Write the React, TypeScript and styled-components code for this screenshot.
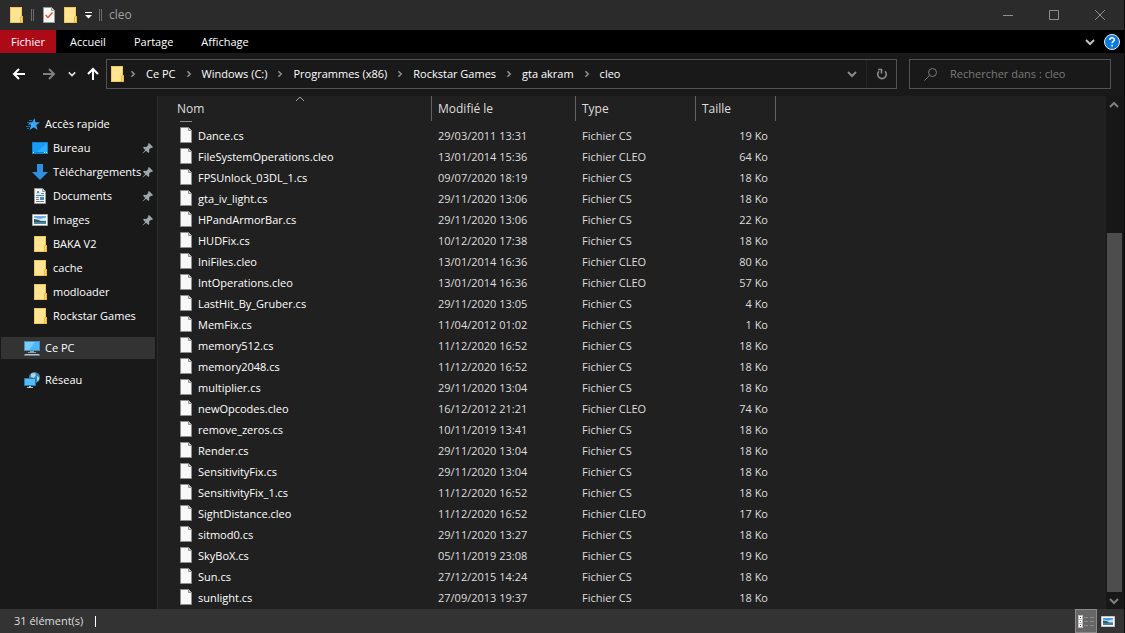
import React from 'react';
import styled, { createGlobalStyle, css } from 'styled-components';

const GlobalStyle = createGlobalStyle`
  * { box-sizing: border-box; }
  html, body, #root { height: 100%; margin: 0; }
  body { background: #191919; }
  body, button, input {
    font-family: "Open Sans", "Noto Sans", sans-serif;
    font-size: 11px;
    line-height: 16px;
    color: #fff;
  }
  button { border: 0; padding: 0; margin: 0; background: none; cursor: default; }
  svg { display: block; flex: none; }
`;

const Window = styled.div`
  display: flex;
  flex-direction: column;
  height: 100vh;
  border-right: 1px solid #0a0a0a;
  background: #191919;
  overflow: hidden;
`;

const TitleBar = styled.header`
  display: flex;
  align-items: center;
  flex: none;
  height: 30px;
  padding-left: 8px;
  background: #2b2b2b;
`;

const QuickTools = styled.div`
  display: flex;
  align-items: center;
  gap: 7px;
`;

const ToolButton = styled.button`
  display: flex;
  align-items: center;
  justify-content: center;
`;

const Bars = styled.span`
  width: 3px;
  height: 12px;
  margin-right: 2px;
  border: solid #6c6c6c;
  border-width: 0 1px;
`;

const Title = styled.h1`
  margin: 0 0 0 5px;
  font-size: 12px;
  font-weight: 400;
  color: #a0a0a0;
`;

const Captions = styled.div`
  display: flex;
  margin-left: auto;
  padding-right: 1px;
`;

const CaptionButton = styled.button`
  display: flex;
  align-items: center;
  justify-content: center;
  width: 46px;
  height: 29px;
`;

const Ribbon = styled.nav`
  display: flex;
  flex: none;
  height: 23px;
  background: #000;
`;

const RibbonTab = styled.button<{ $file?: boolean }>`
  padding: 0 ${p => (p.$file ? 11 : 14)}px;
  background: ${p => (p.$file ? '#ad0a18' : 'transparent')};
`;

const RibbonEnd = styled.div`
  display: flex;
  align-items: center;
  gap: 9px;
  margin-left: auto;
  padding-right: 4px;
`;

const NavBar = styled.div`
  display: flex;
  align-items: center;
  flex: none;
  height: 43px;
  padding: 0 13px 1px 12px;
`;

const History = styled.div`
  display: flex;
  align-items: center;
  width: 94px;
`;

const HistoryButton = styled(ToolButton)<{ $width: number }>`
  flex: none;
  width: ${p => p.$width}px;
  height: 24px;
  justify-content: flex-start;
`;

const Address = styled.div`
  display: flex;
  align-items: center;
  flex: 1;
  min-width: 0;
  height: 30px;
  margin-right: 12px;
  padding-left: 2px;
  border: 1px solid #535353;
`;

const Crumb = styled.button`
  display: flex;
  align-items: center;
  gap: 9px;
  padding-left: 9px;
  white-space: nowrap;
  &:first-of-type { padding-left: 4px; }
`;

const AddressEnd = styled.div`
  display: flex;
  align-self: stretch;
  margin-left: auto;
`;

const AddressButton = styled(ToolButton)`
  width: 30px;
  border-left: 1px solid transparent;
  & + & { border-color: #222; }
`;

const Search = styled.label`
  display: flex;
  align-items: center;
  gap: 12px;
  width: 202px;
  height: 30px;
  padding: 0 8px 0 14px;
  border: 1px solid #535353;
`;

const SearchInput = styled.input`
  flex: 1;
  min-width: 0;
  padding: 0;
  border: 0;
  outline: 0;
  background: transparent;
  &::placeholder { color: #7a7a7a; opacity: 1; }
`;

const Body = styled.div`
  display: flex;
  flex: 1;
  min-height: 0;
`;

const Sidebar = styled.aside`
  display: flex;
  flex-direction: column;
  flex: none;
  width: 158px;
  padding: 16px 2px 0 1px;
  border-right: 1px solid #2b2b2b;
`;

const TreeItem = styled.a<{ $level: number; $selected?: boolean; $spaced?: boolean }>`
  display: flex;
  align-items: center;
  height: 22px;
  margin: ${p => (p.$spaced ? 9 : 1)}px 0 1px;
  padding-left: ${p => (p.$level ? 31 : 23)}px;
  padding-right: 1px;
  color: #fff;
  text-decoration: none;
  ${p => p.$selected && css`background: #333;`}
`;

const TreeLabel = styled.span`
  flex: 1;
  margin-left: 5px;
  white-space: nowrap;
`;

const Main = styled.main`
  flex: 1;
  min-width: 0;
  overflow: hidden;
  background: #202020;
`;

const FileTable = styled.table`
  width: 618px;
  table-layout: fixed;
  border-collapse: separate;
  border-spacing: 0;
`;

const HeadCell = styled.th<{ $name?: boolean }>`
  height: 25px;
  padding: 0 0 0 ${p => (p.$name ? 19 : 6)}px;
  border-right: 1px solid #636363;
  font-size: 12px;
  font-weight: 400;
  text-align: left;
  color: #dedede;
  position: relative;
`;

const SortMark = styled.span`
  position: absolute;
  top: -2px;
  left: 50%;
`;

const ScrolledCell = styled.td`
  height: 4px;
  padding: 0 0 0 22px;
  vertical-align: top;
`;

const ScrolledEdge = styled.div`
  width: 12px;
  height: 1px;
  background: #8f8f8f;
`;

const Cell = styled.td<{ $right?: boolean }>`
  height: 21px;
  padding: 0 ${p => (p.$right ? 8 : 0)}px 0 6px;
  line-height: 17px;
  white-space: nowrap;
  text-align: ${p => (p.$right ? 'right' : 'left')};
  color: #dedede;
`;

const FileName = styled.div`
  display: flex;
  align-items: flex-start;
  gap: 6px;
  padding-left: 16px;
  color: #fff;
`;

const ScrollBar = styled.div`
  display: flex;
  flex-direction: column;
  flex: none;
  width: 18px;
  padding-right: 2px;
  background: #171717;
`;

const ScrollButton = styled(ToolButton)`
  flex: none;
  height: 17px;
`;

const ScrollTrack = styled.div`
  display: flex;
  flex-direction: column;
  justify-content: flex-end;
  flex: 1;
  padding-left: 1px;
`;

const ScrollThumb = styled.div`
  height: 75%;
  background: #4d4d4d;
`;

const StatusBar = styled.footer`
  display: flex;
  align-items: center;
  flex: none;
  height: 24px;
  padding: 0 5px 0 14px;
  background: #333;
  color: #dedede;
`;

const Caret = styled.span`
  width: 1px;
  height: 11px;
  margin-left: 12px;
  background: #fff;
`;

const Views = styled.div`
  display: flex;
  align-self: stretch;
  margin-left: auto;
`;

const ViewButton = styled(ToolButton)<{ $active?: boolean }>`
  width: 22px;
  border: 1px solid ${p => (p.$active ? '#8a8a8a' : 'transparent')};
  background: ${p => (p.$active ? '#666' : 'transparent')};
`;

const Folder = () => (
  <svg width="16" height="16" viewBox="-1 0 16 16">
    <path d="M1 0h12v16H1z" fill="#f0c95a" />
    <path d="M2 1h10v14H2z" fill="#ffe494" />
    <path d="M12 9h2v7h-3v-6z" fill="#e8b93a" />
    <path d="M12 10h1v5h-1z" fill="#ffd968" />
  </svg>
);

const FileIcon = () => (
  <svg width="12" height="16" viewBox="0 0 12 16">
    <path d="M.5.5h8l3 3v12H.5z" fill="#f8f8f8" stroke="#8f8f8f" />
    <path d="M8.5.5v3h3" fill="#d8d8d8" stroke="#8f8f8f" />
  </svg>
);

const CheckedFile = () => (
  <svg width="12" height="16" viewBox="0 0 12 16">
    <path d="M.5.5h8l3 3v12H.5z" fill="#f8f8f8" stroke="#9a9a9a" />
    <path d="M8.5.5v3h3" fill="#d8d8d8" stroke="#9a9a9a" />
    <path d="M2.5 8l2.5 2.500 4.500-5" fill="none" stroke="#e0562b" strokeWidth="1.500" />
  </svg>
);

type ChevronProps = { dir?: 'down' | 'up' | 'right'; size?: number; color?: string; weight?: number };

const Chevron = ({ dir = 'down', size = 10, color = '#aaa', weight = 2 }: ChevronProps) => {
  const d = { down: 'M1 3l4 4 4-4', up: 'M1 7l4-4 4 4', right: 'M3 1.500l3.500 3.500-3.500 3.500' }[dir];
  return (
    <svg width={size} height={size} viewBox="0 0 10 10">
      <path d={d} fill="none" stroke={color} strokeWidth={weight} />
    </svg>
  );
};

const Arrow = ({ to, color }: { to: 'left' | 'right' | 'up'; color: string }) => {
  const d = { left: 'M13 7H2M7 2L2 7l5 5', right: 'M1 7h11M7 2l5 5-5 5', up: 'M7 13V2M2 7l5-5 5 5' }[to];
  return (
    <svg width="14" height="14" viewBox="0 0 14 14">
      <path d={d} fill="none" stroke={color} strokeWidth="2" />
    </svg>
  );
};

const Star = () => (
  <svg width="16" height="16" viewBox="0 0 16 16">
    <path d="M10.500 2l.8 4.200 4.700.3-3.800 2.500 1.300 5-3.700-2.700L5.500 14l1.500-4.500L4 6.500l4.300-.2z" fill="#35a9f5" />
    <path d="M5 4.500h3M3 6.500h3M4 8.500h3M2 10.500h4M3 12.500h2" stroke="#1b6ba8" />
  </svg>
);

const Desktop = () => (
  <svg width="16" height="16" viewBox="0 0 16 16">
    <path d="M0 2h16v12H0z" fill="#0f83d8" />
    <path d="M1 3h14v9H1z" fill="#1b9bf8" />
    <path d="M15 3v9H5z" fill="#31adff" />
    <path d="M1 12.500h1M12 12.500h1M14 12.500h1" stroke="#d8f0ff" />
  </svg>
);

const Download = () => (
  <svg width="16" height="16" viewBox="0 0 16 16">
    <path d="M5 0h6v8h5l-8 8-8-8h5z" fill="#2f8fe2" />
  </svg>
);

const Document = () => (
  <svg width="16" height="16" viewBox="0 0 16 16">
    <path d="M2.500.5h8l3 3v12h-11z" fill="#f6f6f6" stroke="#9b9b9b" />
    <path d="M10.500.5v3h3" fill="#ddd" stroke="#9b9b9b" />
    <path d="M9 5.500h3M4 9.500h3M4 11.500h3M4 13.500h8" stroke="#777f88" />
    <path d="M5 5.500l1-2.500 1 2.500M4 7.500h8" fill="none" stroke="#2688d0" />
    <path d="M8 9h4v3H8z" fill="#3e8fbc" />
  </svg>
);

const Picture = () => (
  <svg width="16" height="12" viewBox="0 0 16 12">
    <path d="M.5.5h15v11H.5z" fill="#fff" stroke="#a6a6a6" />
    <path d="M2 2h12v8H2z" fill="#d9ebf8" />
    <path d="M2 2h12v1.500L8 5 2 3.500z" fill="#6fa9e6" />
    <path d="M2 5l4 .8 3 1.200h5v1H2z" fill="#2f5d55" />
    <path d="M2 8h12v2H2z" fill="#4d88a8" />
  </svg>
);

const SmallPicture = () => (
  <svg width="14" height="11" viewBox="0 0 14 11">
    <path d="M.5.5h13v10H.5z" fill="#fff" stroke="#c9c9c9" />
    <path d="M2 2h10v7H2z" fill="#c6e0f8" />
    <path d="M2 2h10v1.500L7 4.500 2 3.500z" fill="#4d97f0" />
    <path d="M2 4.500l4 .5 2 1.500h4V7H2z" fill="#2e6a50" />
    <path d="M2 7h10v2H2z" fill="#3f7fb0" />
  </svg>
);

const Computer = () => (
  <svg width="16" height="16" viewBox="0 0 16 16">
    <path d="M0 1h16v10H0z" fill="#4b8db5" />
    <path d="M1 2h14v8H1z" fill="#4bb8fb" />
    <path d="M1 2h10L5 10H1z" fill="#7accfd" />
    <path d="M6 11h4v1h2v1H4v-1h2z" fill="#8ea4b0" />
    <path d="M1 14h14l1 1.500H0z" fill="#b9c9d2" />
  </svg>
);

const Network = () => (
  <svg width="16" height="16" viewBox="0 0 16 16">
    <circle cx="10.500" cy="5.500" r="5.500" fill="#3e87ab" />
    <path d="M7 2c2-2 5-1 5 1l-2 3-3-1zM13 4l2 1v3l-2 1z" fill="#a5d4e8" />
    <path d="M0 6h12v8H0z" fill="#3178a6" />
    <path d="M1 7h10v6H1z" fill="#52bdfb" />
    <path d="M5 14h2v1H5zM3 15h6v1H3z" fill="#b9c9d2" />
  </svg>
);

const Pin = () => (
  <svg width="12" height="12" viewBox="0 0 12 12">
    <path d="M7 1l4 4-1 1-1-.3-2 2 .3 2.300-1 1L4 8.700.8 11.500.5 11.200 3.300 8 1 5.700l1-1L4.300 5l2-2L6 2z" fill="#9aa7b0" />
  </svg>
);

type Node = { label: string; icon: React.ReactNode; level: number; pinned?: boolean; selected?: boolean; spaced?: boolean };

const tree: Node[] = [
  { label: 'Accès rapide', icon: <Star />, level: 0 },
  { label: 'Bureau', icon: <Desktop />, level: 1, pinned: true },
  { label: 'Téléchargements', icon: <Download />, level: 1, pinned: true },
  { label: 'Documents', icon: <Document />, level: 1, pinned: true },
  { label: 'Images', icon: <Picture />, level: 1, pinned: true },
  { label: 'BAKA V2', icon: <Folder />, level: 1 },
  { label: 'cache', icon: <Folder />, level: 1 },
  { label: 'modloader', icon: <Folder />, level: 1 },
  { label: 'Rockstar Games', icon: <Folder />, level: 1 },
  { label: 'Ce PC', icon: <Computer />, level: 0, selected: true, spaced: true },
  { label: 'Réseau', icon: <Network />, level: 0, spaced: true },
];

const files: [string, string, number][] = [
  ['Dance.cs', '29/03/2011 13:31', 19],
  ['FileSystemOperations.cleo', '13/01/2014 15:36', 64],
  ['FPSUnlock_03DL_1.cs', '09/07/2020 18:19', 18],
  ['gta_iv_light.cs', '29/11/2020 13:06', 18],
  ['HPandArmorBar.cs', '29/11/2020 13:06', 22],
  ['HUDFix.cs', '10/12/2020 17:38', 18],
  ['IniFiles.cleo', '13/01/2014 16:36', 80],
  ['IntOperations.cleo', '13/01/2014 16:36', 57],
  ['LastHit_By_Gruber.cs', '29/11/2020 13:05', 4],
  ['MemFix.cs', '11/04/2012 01:02', 1],
  ['memory512.cs', '11/12/2020 16:52', 18],
  ['memory2048.cs', '11/12/2020 16:52', 18],
  ['multiplier.cs', '29/11/2020 13:04', 18],
  ['newOpcodes.cleo', '16/12/2012 21:21', 74],
  ['remove_zeros.cs', '10/11/2019 13:41', 18],
  ['Render.cs', '29/11/2020 13:04', 18],
  ['SensitivityFix.cs', '29/11/2020 13:04', 18],
  ['SensitivityFix_1.cs', '11/12/2020 16:52', 18],
  ['SightDistance.cleo', '11/12/2020 16:52', 17],
  ['sitmod0.cs', '29/11/2020 13:27', 18],
  ['SkyBoX.cs', '05/11/2019 23:08', 19],
  ['Sun.cs', '27/12/2015 14:24', 18],
  ['sunlight.cs', '27/09/2013 19:37', 18],
];

const crumbs = ['Ce PC', 'Windows (C:)', 'Programmes (x86)', 'Rockstar Games', 'gta akram', 'cleo'];

export default function App() {
  return (
    <Window>
      <GlobalStyle />
      <TitleBar>
        <QuickTools>
          <Folder />
          <Bars />
          <ToolButton aria-label="Propriétés"><CheckedFile /></ToolButton>
          <ToolButton aria-label="Nouveau dossier"><Folder /></ToolButton>
          <ToolButton aria-label="Personnaliser">
            <svg width="7" height="8" viewBox="0 0 7 8"><path d="M0 1.500h7" stroke="#fff" /><path d="M0 4h7L3.500 7.500z" fill="#fff" /></svg>
          </ToolButton>
          <Bars />
        </QuickTools>
        <Title>cleo</Title>
        <Captions>
          <CaptionButton aria-label="Réduire"><svg width="10" height="10"><path d="M0 5.500h10" stroke="#8f8f8f" /></svg></CaptionButton>
          <CaptionButton aria-label="Agrandir"><svg width="10" height="10"><path d="M.5.5h9v9h-9z" fill="none" stroke="#8f8f8f" /></svg></CaptionButton>
          <CaptionButton aria-label="Fermer"><svg width="10" height="10"><path d="M0 0l10 10M10 0L0 10" stroke="#8f8f8f" /></svg></CaptionButton>
        </Captions>
      </TitleBar>
      <Ribbon>
        <RibbonTab $file>Fichier</RibbonTab>
        <RibbonTab>Accueil</RibbonTab>
        <RibbonTab>Partage</RibbonTab>
        <RibbonTab>Affichage</RibbonTab>
        <RibbonEnd>
          <ToolButton aria-label="Développer le ruban"><Chevron color="#c0c0c0" /></ToolButton>
          <ToolButton aria-label="Aide">
            <svg width="16" height="16" viewBox="0 0 16 16">
              <circle cx="8" cy="8" r="7.500" fill="#0a7bdc" stroke="#e6f1fa" />
              <path d="M5.800 6c0-3 4.500-2.800 4.500-.3 0 1.700-2.200 1.700-2.200 3.600M8.100 10.800v1.600" fill="none" stroke="#fff" strokeWidth="1.500" />
            </svg>
          </ToolButton>
        </RibbonEnd>
      </Ribbon>
      <NavBar>
        <History>
          <HistoryButton $width={30} aria-label="Précédent"><Arrow to="left" color="#fff" /></HistoryButton>
          <HistoryButton $width={26} aria-label="Suivant"><Arrow to="right" color="#7f7f7f" /></HistoryButton>
          <HistoryButton $width={18} aria-label="Emplacements récents"><Chevron size={8} color="#e0e0e0" /></HistoryButton>
          <HistoryButton $width={20} aria-label="Dossier parent"><Arrow to="up" color="#fff" /></HistoryButton>
        </History>
        <Address>
          <Folder />
          {crumbs.map(c => (
            <Crumb key={c}><Chevron dir="right" size={8} color="#8c8c8c" />{c}</Crumb>
          ))}
          <AddressEnd>
            <AddressButton aria-label="Emplacements précédents"><Chevron color="#8a8a8a" /></AddressButton>
            <AddressButton aria-label="Actualiser">
              <svg width="12" height="12" viewBox="0 0 12 12">
                <path d="M3 3.200a4.300 4.300 0 1 0 6 0M2 1.500h3.500v4" fill="none" stroke="#8a8a8a" strokeWidth="1.600" />
              </svg>
            </AddressButton>
          </AddressEnd>
        </Address>
        <Search>
          <svg width="14" height="14" viewBox="0 0 14 14">
            <circle cx="8.500" cy="5.500" r="4" fill="none" stroke="#7a7a7a" />
            <path d="M5.500 8.500l-5 5" stroke="#7a7a7a" />
          </svg>
          <SearchInput aria-label="Rechercher" placeholder="Rechercher dans : cleo" />
        </Search>
      </NavBar>
      <Body>
        <Sidebar>
          {tree.map(n => (
            <TreeItem key={n.label} href="#" $level={n.level} $selected={n.selected} $spaced={n.spaced}>
              {n.icon}
              <TreeLabel>{n.label}</TreeLabel>
              {n.pinned && <Pin />}
            </TreeItem>
          ))}
        </Sidebar>
        <Main>
          <FileTable>
            <colgroup><col width="274" /><col width="144" /><col width="120" /><col width="80" /></colgroup>
            <thead>
              <tr>
                <HeadCell $name>Nom<SortMark><Chevron dir="up" weight={1} color="#a0a0a0" /></SortMark></HeadCell>
                <HeadCell>Modifié le</HeadCell>
                <HeadCell>Type</HeadCell>
                <HeadCell>Taille</HeadCell>
              </tr>
            </thead>
            <tbody>
              <tr><ScrolledCell colSpan={4}><ScrolledEdge /></ScrolledCell></tr>
              {files.map(([name, date, size]) => (
                <tr key={name}>
                  <Cell><FileName><FileIcon />{name}</FileName></Cell>
                  <Cell>{date}</Cell>
                  <Cell>Fichier {name.endsWith('.cleo') ? 'CLEO' : 'CS'}</Cell>
                  <Cell $right>{size} Ko</Cell>
                </tr>
              ))}
            </tbody>
          </FileTable>
        </Main>
        <ScrollBar>
          <ScrollButton aria-label="Défiler vers le haut"><Chevron dir="up" color="#808080" /></ScrollButton>
          <ScrollTrack><ScrollThumb /></ScrollTrack>
          <ScrollButton aria-label="Défiler vers le bas"><Chevron color="#808080" /></ScrollButton>
        </ScrollBar>
      </Body>
      <StatusBar>
        31 élément(s)
        <Caret />
        <Views>
          <ViewButton $active aria-label="Détails">
            <svg width="16" height="13" viewBox="0 0 16 13">
              <path d="M0 0h5v13H0z" fill="#bbb" />
              <path d="M1 1h3v3H1zM1 5h3v3H1zM1 9h3v3H1z" fill="#fff" />
              <path d="M2 2h1v1H2z" fill="#333" /><path d="M2 6h1v1H2z" fill="#2a7de0" /><path d="M2 10h1v1H2z" fill="#e02020" />
              <path d="M6 2.500h4M12 2.500h4M6 6.500h4M12 6.500h4M6 10.500h4M12 10.500h4" stroke="#8a8a8a" />
            </svg>
          </ViewButton>
          <ViewButton aria-label="Grandes icônes"><SmallPicture /></ViewButton>
        </Views>
      </StatusBar>
    </Window>
  );
}
